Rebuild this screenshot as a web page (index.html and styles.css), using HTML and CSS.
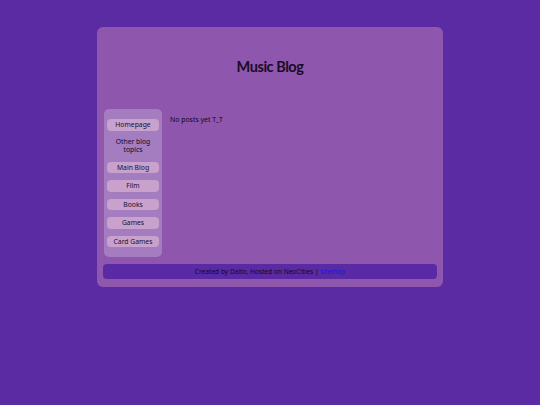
FILE: index.html
```html
<!DOCTYPE html>
<html>
<head>
<meta charset="utf-8">
<link rel="stylesheet" href="styles.css">
</head>
<body>
<div class="page">
  <header class="header">
    <h1 class="title">Music Blog</h1>
  </header>
  <div class="main">
    <nav class="sidebar">
      <a class="btn" href="#">Homepage</a>
      <div class="label">Other blog<br>topics</div>
      <a class="btn" href="#">Main Blog</a>
      <a class="btn" href="#">Film</a>
      <a class="btn" href="#">Books</a>
      <a class="btn" href="#">Games</a>
      <a class="btn" href="#">Card Games</a>
    </nav>
    <div class="content">
      <p class="post">No posts yet T_T</p>
    </div>
  </div>
  <footer class="footer">Created by Daito, Hosted on NeoCities | <a class="link" href="#">sitemap</a></footer>
</div>
</body>
</html>
```
FILE: styles.css
```css
html, body {
  margin: 0;
  padding: 0;
  background: #5a2ba3;
  font-family: "Noto Sans", "Open Sans", sans-serif;
  font-weight: 400;
  color: #10081a;
}
body {
  padding-top: 27px;
}
.page {
  width: 334px;
  margin: 0 auto;
  background: #8e56ad;
  border-radius: 6px;
  padding: 6px 6px 8px 6px;
}
.header {
  padding: 24px 0 32px;
  text-align: center;
}
.title {
  margin: 0;
  font-family: Lato, "Noto Sans", sans-serif;
  font-size: 14.5px;
  letter-spacing: -0.45px;
  line-height: 20px;
  font-weight: 700;
  color: #1a0c26;
}
.main {
  display: flex;
  gap: 8px;
  padding-left: 1px;
}
.sidebar {
  width: 52px;
  padding: 10px 3px;
  background: #a47dc1;
  border-radius: 5px;
  display: flex;
  flex-direction: column;
  gap: 7px;
}
.btn {
  display: block;
  height: 11.5px;
  line-height: 11.5px;
  background: #c8a1cc;
  border-radius: 4px;
  text-align: center;
  font-size: 6.8px;
  color: #1e0e28;
  text-decoration: none;
}
.label {
  text-align: center;
  font-size: 6.8px;
  line-height: 8.5px;
  color: #120820;
}
.content {
  flex: 1;
}
.post {
  margin: 6px 0 0;
  font-size: 6.9px;
  line-height: 9px;
}
.footer {
  margin-top: 7px;
  height: 15px;
  line-height: 15px;
  background: #5a2aa4;
  border-radius: 4px;
  text-align: center;
  font-size: 6.6px;
  color: #10081a;
}
.link {
  color: #1c10e8;
  text-decoration: none;
}
```
